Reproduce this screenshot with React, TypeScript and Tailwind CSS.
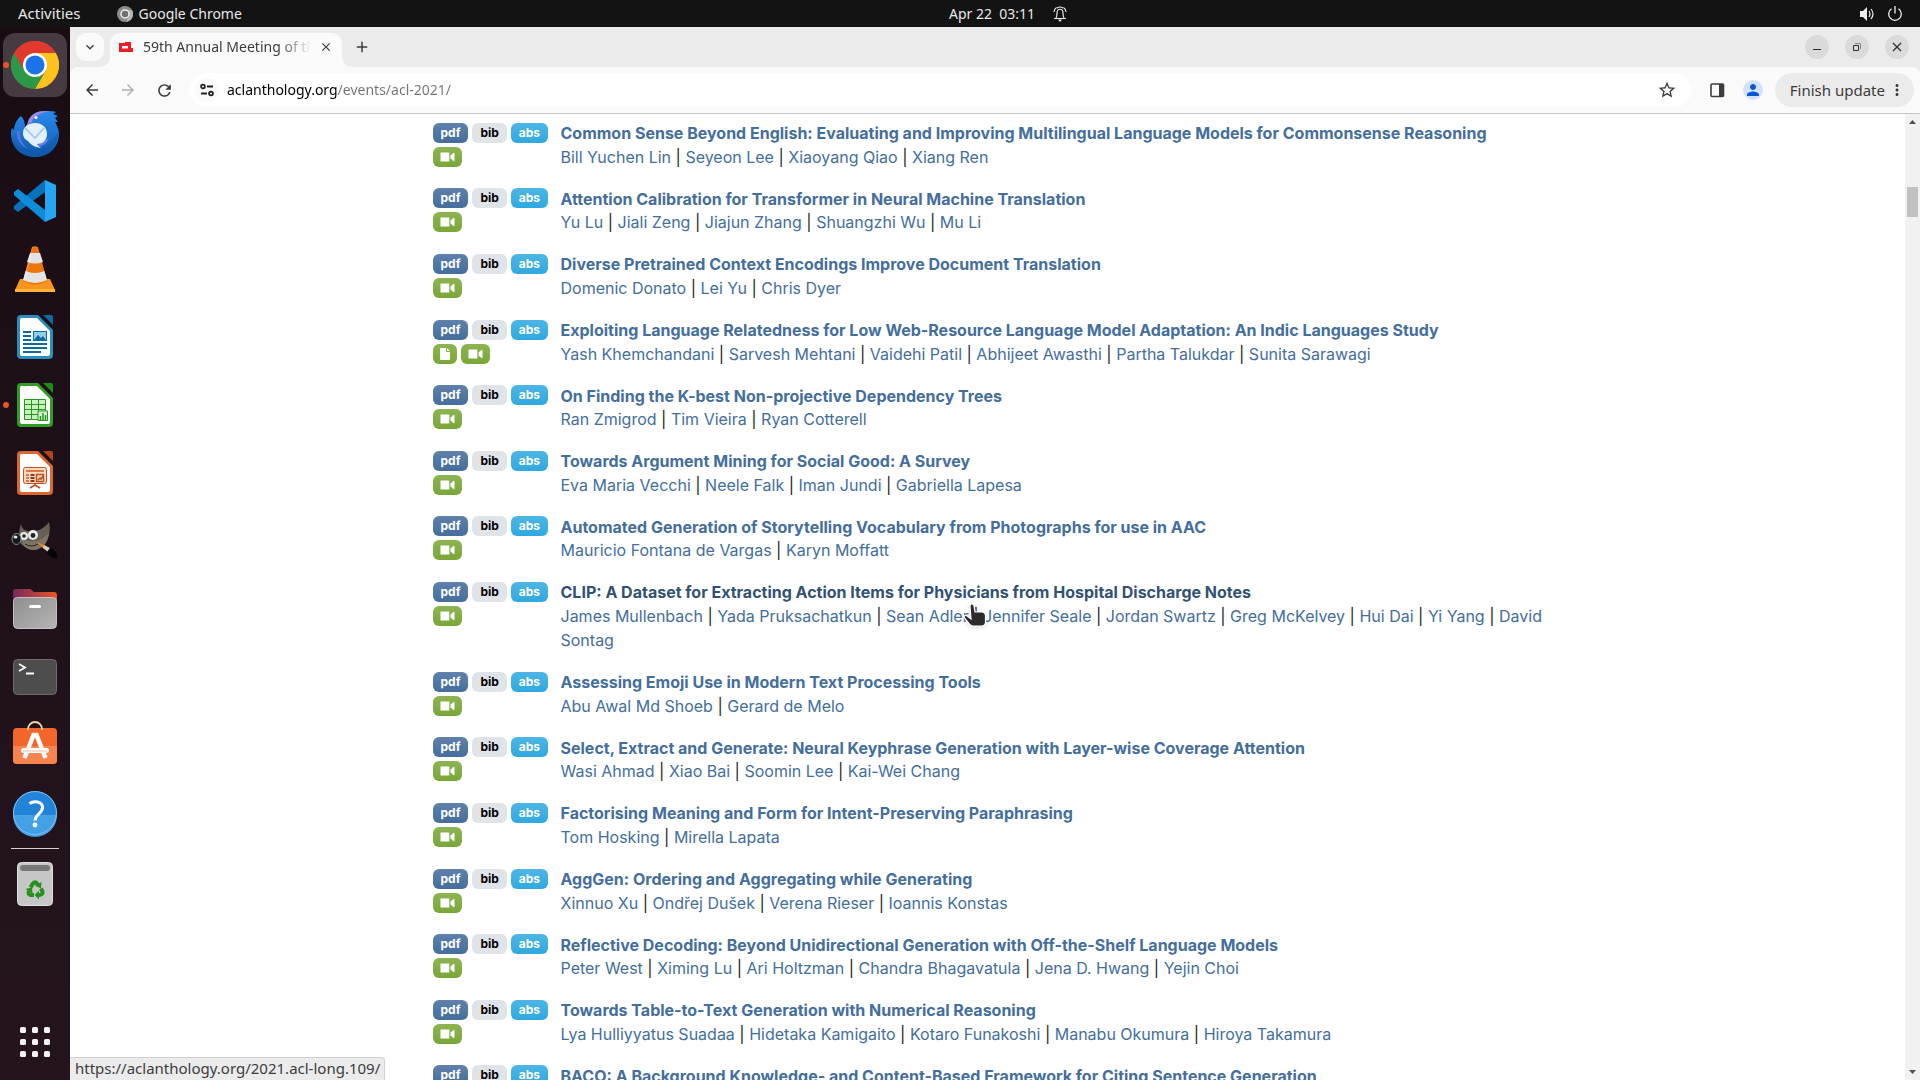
import { Fragment, type ReactNode } from "react";
import {
  MdAdd,
  MdArrowBack,
  MdArrowForward,
  MdClose,
  MdExpandMore,
  MdMoreVert,
  MdPerson,
  MdRefresh,
  MdStarBorder,
} from "react-icons/md";

interface Paper {
  title: string;
  authors: string[];
  hasFile?: boolean;
  hovered?: boolean;
}

const papers: Paper[] = [
  {
    title: "Common Sense Beyond English: Evaluating and Improving Multilingual Language Models for Commonsense Reasoning",
    authors: ["Bill Yuchen Lin", "Seyeon Lee", "Xiaoyang Qiao", "Xiang Ren"],
  },
  {
    title: "Attention Calibration for Transformer in Neural Machine Translation",
    authors: ["Yu Lu", "Jiali Zeng", "Jiajun Zhang", "Shuangzhi Wu", "Mu Li"],
  },
  {
    title: "Diverse Pretrained Context Encodings Improve Document Translation",
    authors: ["Domenic Donato", "Lei Yu", "Chris Dyer"],
  },
  {
    title: "Exploiting Language Relatedness for Low Web-Resource Language Model Adaptation: An Indic Languages Study",
    authors: ["Yash Khemchandani", "Sarvesh Mehtani", "Vaidehi Patil", "Abhijeet Awasthi", "Partha Talukdar", "Sunita Sarawagi"],
    hasFile: true,
  },
  {
    title: "On Finding the K-best Non-projective Dependency Trees",
    authors: ["Ran Zmigrod", "Tim Vieira", "Ryan Cotterell"],
  },
  {
    title: "Towards Argument Mining for Social Good: A Survey",
    authors: ["Eva Maria Vecchi", "Neele Falk", "Iman Jundi", "Gabriella Lapesa"],
  },
  {
    title: "Automated Generation of Storytelling Vocabulary from Photographs for use in AAC",
    authors: ["Mauricio Fontana de Vargas", "Karyn Moffatt"],
  },
  {
    title: "CLIP: A Dataset for Extracting Action Items for Physicians from Hospital Discharge Notes",
    authors: ["James Mullenbach", "Yada Pruksachatkun", "Sean Adler", "Jennifer Seale", "Jordan Swartz", "Greg McKelvey", "Hui Dai", "Yi Yang", "David Sontag"],
    hovered: true,
  },
  {
    title: "Assessing Emoji Use in Modern Text Processing Tools",
    authors: ["Abu Awal Md Shoeb", "Gerard de Melo"],
  },
  {
    title: "Select, Extract and Generate: Neural Keyphrase Generation with Layer-wise Coverage Attention",
    authors: ["Wasi Ahmad", "Xiao Bai", "Soomin Lee", "Kai-Wei Chang"],
  },
  {
    title: "Factorising Meaning and Form for Intent-Preserving Paraphrasing",
    authors: ["Tom Hosking", "Mirella Lapata"],
  },
  {
    title: "AggGen: Ordering and Aggregating while Generating",
    authors: ["Xinnuo Xu", "Ondřej Dušek", "Verena Rieser", "Ioannis Konstas"],
  },
  {
    title: "Reflective Decoding: Beyond Unidirectional Generation with Off-the-Shelf Language Models",
    authors: ["Peter West", "Ximing Lu", "Ari Holtzman", "Chandra Bhagavatula", "Jena D. Hwang", "Yejin Choi"],
  },
  {
    title: "Towards Table-to-Text Generation with Numerical Reasoning",
    authors: ["Lya Hulliyyatus Suadaa", "Hidetaka Kamigaito", "Kotaro Funakoshi", "Manabu Okumura", "Hiroya Takamura"],
  },
  {
    title: "BACO: A Background Knowledge- and Content-Based Framework for Citing Sentence Generation",
    authors: ["Yubin Ge", "Ly Dinh", "Xiaofeng Liu", "Jinsong Su", "Ziyao Lu", "Ante Wang", "Jana Diesner"],
  },
];

const badge = "mr-1 inline-flex h-5 items-center rounded-md align-middle text-xs leading-none font-bold";

function VideoIcon() {
  return (
    <svg className="h-3 w-[15px]" viewBox="0 0 15 12" fill="#fff">
      <path d="M.5 1.5h8.800v9H.5zM10.500 4.500 13.500 2a.7.7 0 0 1 1 .6v6.800a.7.7 0 0 1-1 .6l-3-2.500z" />
    </svg>
  );
}

function FileIcon() {
  return (
    <svg className="h-3 w-[10px]" viewBox="0 0 10 12" fill="#fff">
      <path d="M.9 0H6v3.300c0 .4.300.7.7.7H10v7.200a.8.8 0 0 1-.8.8H.9a.8.8 0 0 1-.8-.8V.8A.8.8 0 0 1 .9 0zM7 0l3 3H7z" />
    </svg>
  );
}

function PaperRow({ paper }: { paper: Paper }) {
  return (
    <li className="mb-4 flex">
      <div className="mr-2 w-[120px] shrink-0 whitespace-nowrap">
        <a href="#pdf" className={`${badge} bg-linear-to-b from-[#5f81ab] to-[#446e9b] px-2 text-white`}>pdf</a>
        <a href="#bib" className={`${badge} bg-[#e0e4e8] px-2 text-black`}>bib</a>
        <a href="#abs" className={`${badge} bg-linear-to-b from-[#4db6e5] to-[#2da9e0] px-2 text-white`}>abs</a>
        <br />
        {paper.hasFile && (
          <a href="#file" aria-label="Software" className={`${badge} bg-linear-to-b from-[#8db453] to-[#79a736] px-[7px]`}>
            <FileIcon />
          </a>
        )}
        <a href="#video" aria-label="Video" className={`${badge} bg-linear-to-b from-[#8db453] to-[#79a736] px-[7px]`}>
          <VideoIcon />
        </a>
      </div>
      <div>
        <strong className="font-bold">
          <a href="#paper" className={`align-middle ${paper.hovered ? "text-[#325173]" : "text-[#446e9b]"}`}>
            {paper.title}
          </a>
        </strong>
        <br />
        {paper.authors.map((author, i) => (
          <Fragment key={author}>
            {i > 0 && " | "}
            <a href="#author" className="text-[#446e9b]">{author}</a>
          </Fragment>
        ))}
      </div>
    </li>
  );
}

function ChromeIcon() {
  return (
    <svg className="size-12" viewBox="0 0 48 48">
      <circle cx="24" cy="24" r="24" fill="#e33b2e" />
      <path d="M24 12h20.800A24 24 0 0 1 24 48l10.400-18z" fill="#fcc31e" />
      <path d="M3.200 12A24 24 0 0 0 24 48l10.400-18L24 24l-10.400 6z" fill="#2a9846" />
      <path d="M3.200 12A24 24 0 0 1 44.800 12H24L13.600 30z" fill="#e03a2f" />
      <circle cx="24" cy="24" r="12" fill="#fff" />
      <circle cx="24" cy="24" r="9.500" fill="#1a73e8" />
    </svg>
  );
}

function ThunderbirdIcon() {
  return (
    <svg className="size-12" viewBox="0 0 48 48">
      <defs>
        <linearGradient id="bird" x1="0" y1="0" x2="0" y2="1">
          <stop offset="0" stopColor="#2a8bee" />
          <stop offset="1" stopColor="#0d57ad" />
        </linearGradient>
      </defs>
      <path d="M17 13C19 5 27 2 34 2c5 0 9 0 11 1l-3 2 5 2-3 2 3 4-3 0c2 4 4 7 4 12 0 13-10 23-24 23S0 38 0 25c0-2 0-4 1-6l2 2c0-5 3-11 7-14 4 4 4 9 4 13z" fill="url(#bird)" />
      <path d="M1 26c3 12 16 18 28 14 10-3 15-12 18-17 1 15-9 25-23 25S1 39 1 26z" fill="#0f57ac" opacity=".5" />
      <path d="M17 13C19 5 27 2 34 2l4 .300C28 4 22 8 21 13l-5 2z" fill="#a487ea" />
      <path d="M6 22c-1 8 4 15 11 18-6-5-9-12-8-18z" fill="#5a72e0" />
      <path d="M23 38c8 0 13-3 15-9l-12 7z" fill="#6a80e8" />
      <circle cx="25" cy="8.500" r="1.500" fill="#fff" />
      <path d="M24 14c7 0 12 4 12 11 0 6-4 10-10 10 1 2 3 3 4 4-7-1-11-4-13-7-4-2-5-5-5-8 0-6 5-10 12-10z" fill="#e3effc" />
      <path d="m14 19 10 10 9-10" fill="none" stroke="#9cc3ee" strokeWidth="1.500" />
    </svg>
  );
}

function CodeIcon() {
  return (
    <svg className="size-12" viewBox="0 0 48 48">
      <path d="m3 32 4 3 27-20V3L3 29z" fill="#0a72ba" />
      <path d="m3 15 4-3 27 21v12L3 18z" fill="#0f8ddb" />
      <path d="m34 3 11 5v32l-11 5z" fill="#27a5f3" />
    </svg>
  );
}

function VlcIcon() {
  return (
    <svg className="size-12" viewBox="0 0 48 48">
      <path d="M9 34h30l5 11c0 1 0 2-1 2H5c-1 0-1-1-1-2z" fill="#f89420" />
      <path d="M4 44h40v3H4z" fill="#ffb338" />
      <path d="M21 2q3-1.500 6 0l9 34q-12 7-24 0z" fill="#ee7409" />
      <path d="m19 8 10 0 3 9q-8 3-16 0zM14.500 26q9.500 4 19 0l2.500 9q-12 6-24 0z" fill="#e4e4e4" />
      <path d="M24 1h-2l-7 35q-3-1-3-1l9-33z" fill="#fff" opacity=".18" />
    </svg>
  );
}

function OfficeIcon({ dark, main, children }: { dark: string; main: string; children: ReactNode }) {
  return (
    <svg className="size-12" viewBox="0 0 48 48">
      <path d="M10 2h17l15 15v25a4 4 0 0 1-4 4H10a4 4 0 0 1-4-4V6a4 4 0 0 1 4-4z" fill={main} />
      <path d="M10 5h16l13 13v23a2 2 0 0 1-2 2H11a2 2 0 0 1-2-2V7a2 2 0 0 1 1-2z" fill="#fff" />
      <path d="M32 2h8a2 2 0 0 1 2 2v8z" fill={dark} />
      {children}
    </svg>
  );
}

function WriterIcon() {
  return (
    <OfficeIcon dark="#0d6ba0" main="#2b8cbe">
      <path d="M12 19h8M12 23h8M12 27h8M12 31h24M12 35h24M12 39h18" stroke="#0b6c9f" strokeWidth="2" />
      <rect x="22.500" y="18.500" width="13" height="9" fill="#8fd0f0" stroke="#0b6c9f" />
      <path d="m23 27 4-5 3 3 2-2 3 4z" fill="#0b6c9f" />
    </OfficeIcon>
  );
}

function CalcIcon() {
  return (
    <OfficeIcon dark="#1f8c13" main="#2f9f22">
      <path d="M13.500 18.500h21v20h-21z" fill="#c5f2bd" stroke="#2c9520" />
      <path d="M13 23.500h22M13 28.500h22M13 33.500h22M20.500 18v21M27.500 18v21" stroke="#2c9520" />
      <path d="M27 30h9.500v9.500H27z" fill="#d5f7cf" stroke="#2c9520" />
      <path d="M29.500 39v-4M32 39v-7M34.500 39v-5" stroke="#2c9520" strokeWidth="1.500" />
    </OfficeIcon>
  );
}

function ImpressIcon() {
  return (
    <OfficeIcon dark="#b84614" main="#dc6731">
      <rect x="12.500" y="18.500" width="23" height="16" rx="2" fill="#fbd9c5" stroke="#bb5220" />
      <path d="M15 22h18" stroke="#e0773f" strokeWidth="2" />
      <path d="M15 26h3M15 29h3M15 32h3" stroke="#e0773f" strokeWidth="2" />
      <path d="M19.500 26h4M19.500 29h4M19.500 32h4" stroke="#8e3a14" strokeWidth="2" />
      <path d="M25.500 25.500h7v7h-7zM27 31l2-2 1 1 2-3M24 35v2M24 36l-5 3M24 36l5 3" fill="none" stroke="#bb5220" strokeWidth="1.500" />
    </OfficeIcon>
  );
}

function GimpIcon() {
  return (
    <svg className="size-12" viewBox="0 0 48 48">
      <path d="M10 7c1 5 4 7 8 7 8 1 15-2 20-9 2 8 0 17-4 22-6 7-17 7-24 0-3-6-2-14 0-20z" fill="#666052" />
      <path d="M10 20c6 6 18 7 28-4-1 9-6 17-16 17-7 0-11-5-12-13z" fill="#7c7564" />
      <circle cx="13" cy="19" r="4" fill="#e9e9e9" />
      <circle cx="22" cy="18" r="5" fill="#e9e9e9" />
      <circle cx="13" cy="19" r="1.800" fill="#222" />
      <circle cx="22" cy="18.500" r="2.400" fill="#222" />
      <ellipse cx="5.500" cy="22" rx="4.500" ry="5.500" fill="#16191b" stroke="#8a908f" />
      <ellipse cx="4.500" cy="20" rx="2" ry="1.500" fill="#dfe8e8" />
      <path d="M14 27q7 4 13 0" stroke="#26221c" fill="none" />
      <path d="m26 25 9 4-2 3z" fill="#e88a1a" />
      <path d="m33 28 6 3-2 4-5-4z" fill="#d4d0c8" />
      <path d="m39 31c5 2 8 6 7 11-5-1-9-3-10-7z" fill="#050505" />
    </svg>
  );
}

function FilesIcon() {
  return (
    <svg className="size-12" viewBox="0 0 48 48">
      <defs>
        <linearGradient id="folder" x1="0" y1="0" x2="1" y2="0">
          <stop offset="0" stopColor="#76295c" />
          <stop offset="1" stopColor="#ed5427" />
        </linearGradient>
        <linearGradient id="drawer" x1="0" y1="0" x2="1" y2="1">
          <stop offset="0" stopColor="#8e8e8e" />
          <stop offset="1" stopColor="#b5b5b5" />
        </linearGradient>
      </defs>
      <path d="M5 4h13q2 0 3 1.500L23 7h20q3 0 3 3v8H2V7q0-3 3-3z" fill="url(#folder)" />
      <rect x="2.500" y="12.500" width="43" height="31" rx="4" fill="url(#drawer)" stroke="#c2c2c2" />
      <rect x="18" y="20" width="12" height="3" rx="1.500" fill="#fff" />
    </svg>
  );
}

function TerminalIcon() {
  return (
    <svg className="size-12" viewBox="0 0 48 48">
      <rect x="2.500" y="6.500" width="43" height="35" rx="4" fill="#4d4d4d" stroke="#6c6c6c" />
      <path d="m8 11 6 3.500L8 18M15 20.500h8" fill="none" stroke="#fff" strokeWidth="1.800" />
    </svg>
  );
}

function SoftwareIcon() {
  return (
    <svg className="size-12" viewBox="0 0 48 48">
      <rect x="2" y="7" width="44" height="36" rx="4" fill="#f2652b" />
      <path d="M2 25h44v14a4 4 0 0 1-4 4H6a4 4 0 0 1-4-4z" fill="#f58451" />
      <path d="M17 9V8a7 7 0 0 1 14 0v1" fill="none" stroke="#f5d6a0" strokeWidth="1.800" />
      <path d="m13.500 37 9-23h3l9 23" fill="none" stroke="#fff" strokeWidth="4.500" />
      <rect x="10" y="27" width="28" height="5" rx="2.500" fill="#fff" />
      <path d="M12 30h24" stroke="#f5b899" />
    </svg>
  );
}

function HelpIcon() {
  return (
    <svg className="size-12" viewBox="0 0 48 48">
      <circle cx="24" cy="24" r="22" fill="#2284d9" />
      <path d="M2 26h44a22 22 0 0 1-44 0z" fill="#43a0e4" />
      <circle cx="24" cy="24" r="21.500" fill="none" stroke="#80c1ee" />
      <path d="M18.500 14.500c4-3 13-2.500 13 4 0 6-7 6-7.500 13" fill="none" stroke="#fff" strokeWidth="3" />
      <circle cx="24" cy="36" r="2.400" fill="#fff" />
    </svg>
  );
}

function TrashIcon() {
  return (
    <svg className="size-12" viewBox="0 0 48 48">
      <rect x="6.500" y="2.500" width="35" height="43" rx="4" fill="#c6c6c6" stroke="#e0e0e0" />
      <rect x="9" y="5" width="30" height="6" rx="3" fill="#777" />
      <g fill="none" stroke="#26901c" strokeWidth="4">
        <path d="m19.500 27.500 2.500-4q2-2.500 4 0l1.500 2" />
        <path d="m30 28.500 1.500 3q.5 3.500-3.500 3.500" />
        <path d="M23 35h-3.500q-3-1-1.500-4" />
      </g>
      <path d="m30.500 22-.5 6.500-6-3zM28 39.500v-9l-4.500 4.500zM14.500 29l6.500-1.500.5 6z" fill="#26901c" />
    </svg>
  );
}

function GridIcon() {
  const steps = [9, 21, 33];
  return (
    <svg className="size-12" viewBox="0 0 48 48" fill="#f4f2f3">
      {steps.map((y) => steps.map((x) => <rect key={`${x}-${y}`} x={x} y={y} width="6" height="6" rx="1.500" />))}
    </svg>
  );
}

const dockItems = [
  { name: "Google Chrome", icon: <ChromeIcon />, active: true, running: true },
  { name: "Thunderbird", icon: <ThunderbirdIcon /> },
  { name: "Visual Studio Code", icon: <CodeIcon /> },
  { name: "VLC", icon: <VlcIcon /> },
  { name: "LibreOffice Writer", icon: <WriterIcon /> },
  { name: "LibreOffice Calc", icon: <CalcIcon />, running: true },
  { name: "LibreOffice Impress", icon: <ImpressIcon /> },
  { name: "GIMP", icon: <GimpIcon /> },
  { name: "Files", icon: <FilesIcon /> },
  { name: "Terminal", icon: <TerminalIcon /> },
  { name: "Ubuntu Software", icon: <SoftwareIcon /> },
  { name: "Help", icon: <HelpIcon /> },
];

function Dock() {
  return (
    <nav className="flex w-[70px] shrink-0 flex-col items-center gap-1 bg-linear-to-b from-[#190d14] to-[#25141e] py-[6px]">
      {dockItems.map((item) => (
        <button
          key={item.name}
          aria-label={item.name}
          className={`relative flex size-16 shrink-0 items-center justify-center rounded-xl ${item.active ? "bg-[#463b42]" : ""}`}
        >
          {item.running && <span className="absolute top-[29px] left-0 size-[6px] rounded-full bg-[#e95420]" />}
          {item.icon}
        </button>
      ))}
      <hr className="-my-px w-12 border-[#d6d2d4]" />
      <button aria-label="Trash" className="flex size-16 shrink-0 items-center justify-center">
        <TrashIcon />
      </button>
      <button aria-label="Show Applications" className="mt-auto flex size-16 shrink-0 items-center justify-center">
        <GridIcon />
      </button>
    </nav>
  );
}

function TopBar() {
  return (
    <header className="grid h-[27px] shrink-0 grid-cols-3 items-center bg-[#131313] text-[14px] text-[#e8e8e8]">
      <div className="flex items-center pl-[18px]">
        <button className="text-[15px]">Activities</button>
        <button className="ml-9 flex items-center gap-[6px]">
          <svg className="size-4" viewBox="0 0 16 16">
            <circle cx="8" cy="8" r="8" fill="#8b8b8b" />
            <path d="M8 4h7a8 8 0 0 1-6 12l3-6z" fill="#b5b5b5" />
            <circle cx="8" cy="8" r="4" fill="#6e6e6e" stroke="#eee" strokeWidth="1.500" />
          </svg>
          Google Chrome
        </button>
      </div>
      <div className="flex items-center justify-center gap-[18px] pl-24">
        <button className="whitespace-pre">Apr 22  03:11</button>
        <svg className="h-4 w-[14px]" viewBox="0 0 14 16" fill="none" stroke="#e8e8e8" strokeWidth="1.200">
          <path d="M1 12.500h12M3 12c1-1 1-2 1-5 0-5 6-5 6 0 0 3 0 4 1 5M1 6c0-2 1-3.500 2.500-4.500M13 6c0-2-1-3.500-2.500-4.500M4 2q3-2 6 0" />
          <path d="M5 13.500h4L7 16z" fill="#e8e8e8" stroke="none" />
        </svg>
      </div>
      <div className="flex items-center justify-end gap-3 pr-[17px]">
        <svg className="size-4" viewBox="0 0 16 16">
          <path d="M1 5h3l4-4v14l-4-4H1z" fill="#f0f0f0" />
          <path d="M10 5q2 3 0 6M12 3q4 5 0 10" fill="none" stroke="#f0f0f0" strokeWidth="1.200" />
        </svg>
        <svg className="size-4" viewBox="0 0 16 16" fill="none" stroke="#f0f0f0" strokeWidth="1.300">
          <path d="M8 0v7.500M4.500 2.800a6.300 6.300 0 1 0 7 0" />
        </svg>
      </div>
    </header>
  );
}

function TabStrip() {
  return (
    <div className="flex h-10 shrink-0 items-center bg-[#ebebeb] pl-[6px] text-[#3c3c3c]">
      <button aria-label="Search tabs" className="flex size-7 items-center justify-center rounded-[10px] bg-[#fafafa]">
        <MdExpandMore className="size-4" />
      </button>
      <div className="relative ml-[6px] flex h-[34px] w-[232px] items-center self-end rounded-t-[10px] bg-[#fafafa] pr-2 pb-[6px] pl-[9px]">
        <svg className="absolute bottom-0 -left-[10px] size-[10px]" viewBox="0 0 10 10" fill="#fafafa">
          <path d="M10 0v10H0A10 10 0 0 0 10 0z" />
        </svg>
        <svg className="absolute -right-[10px] bottom-0 size-[10px]" viewBox="0 0 10 10" fill="#fafafa">
          <path d="M0 0v10h10A10 10 0 0 1 0 0z" />
        </svg>
        <svg className="h-[10px] w-[14px]" viewBox="0 0 14 10">
          <path fillRule="evenodd" fill="#ed1c24" d="M0 1h6V0h6v6h2v4H0zM3 4v2.500h6V4z" />
        </svg>
        <span className="ml-[10px] flex-1 overflow-hidden mask-[linear-gradient(to_right,#000_135px,transparent_168px)] pb-[2px] text-[14px] whitespace-nowrap">
          59th Annual Meeting of the Association for Computational Linguistics
        </span>
        <button aria-label="Close tab" className="ml-[9px] flex size-4 items-center justify-center">
          <MdClose className="size-[14px]" />
        </button>
      </div>
      <button aria-label="New tab" className="ml-[11px] flex size-[18px] items-center justify-center">
        <MdAdd className="size-[18px]" />
      </button>
      <div className="ml-auto flex gap-4 pr-[11px]">
        <button aria-label="Minimize" className="flex size-6 items-center justify-center rounded-full bg-[#dadada]">
          <svg className="size-3" viewBox="0 0 12 12"><path d="M2 8.500h8" stroke="#2e2e2e" /></svg>
        </button>
        <button aria-label="Restore" className="flex size-6 items-center justify-center rounded-full bg-[#dadada]">
          <svg className="size-3" viewBox="0 0 12 12" fill="none">
            <path d="M4 2.500h5.500V8" stroke="#8a8a8a" />
            <path d="M2.500 4.500h5v5h-5z" stroke="#2e2e2e" />
          </svg>
        </button>
        <button aria-label="Close" className="flex size-6 items-center justify-center rounded-full bg-[#dadada]">
          <svg className="size-3" viewBox="0 0 12 12"><path d="m2 2 8 8m0-8-8 8" stroke="#2e2e2e" strokeWidth="1.300" /></svg>
        </button>
      </div>
    </div>
  );
}

function Toolbar() {
  return (
    <div className="bg-[#ebebeb]">
      <div className="flex h-[47px] items-center rounded-t-[8px] border-b border-[#c6c6c6] bg-[#fafafa] pr-[6px] pl-3 text-[#3c3c3c]">
        <button aria-label="Back" className="mr-4 ml-px"><MdArrowBack className="size-[18px]" /></button>
        <button aria-label="Forward" className="mr-4 ml-[2px] text-[#b0b0b0]"><MdArrowForward className="size-[18px]" /></button>
        <button aria-label="Reload" className="ml-[2px]"><MdRefresh className="size-[19px]" /></button>
        <div className="ml-4 flex h-[34px] flex-1 items-center rounded-full bg-white pr-[14px] pl-[5px]">
          <button aria-label="View site information" className="flex size-6 items-center justify-center rounded-full bg-[#fafafa]">
            <svg className="size-4" viewBox="0 0 16 16" fill="none" stroke="#1f1f1f" strokeWidth="1.800">
              <circle cx="4" cy="4.500" r="1.900" />
              <path d="M8 4.500h6M2 11.500h6" />
              <circle cx="12" cy="11.500" r="1.900" />
            </svg>
          </button>
          <input
            aria-label="Address and search bar"
            defaultValue="aclanthology.org/events/acl-2021/"
            className="ml-2 flex-1 bg-[linear-gradient(to_right,#000_110px,#737373_110px)] bg-clip-text pb-[2px] text-[14px] text-transparent outline-none"
          />
          <button aria-label="Bookmark this tab"><MdStarBorder className="size-5" /></button>
        </div>
        <button aria-label="Side panel" className="ml-[18px]">
          <svg className="size-4" viewBox="0 0 16 16">
            <rect x="2" y="2" width="12.500" height="12.500" rx="1" fill="none" stroke="#3c3c3c" strokeWidth="1.600" />
            <path d="M10 2h4.500v12.500H10z" fill="#3c3c3c" />
          </svg>
        </button>
        <button aria-label="Profile" className="ml-[18px] flex size-5 items-center justify-center rounded-full bg-[#d3e3fd] text-[#0b57d0]">
          <MdPerson className="size-[18px]" />
        </button>
        <button className="ml-3 flex h-[34px] items-center rounded-full bg-[#ebebeb] pr-[8px] pl-[15px] text-[15px] whitespace-nowrap">
          Finish update
          <MdMoreVert className="ml-[3px] size-[18px]" />
        </button>
      </div>
    </div>
  );
}

function Scrollbar() {
  return (
    <div className="flex w-[15px] shrink-0 flex-col items-center bg-[#f1f1f1] py-[6px]">
      <svg className="h-1 w-[7px]" viewBox="0 0 7 4"><path d="M0 4h7L3.500 0z" fill="#505050" /></svg>
      <div className="mt-[63px] h-[30px] w-[11px] bg-[#c1c1c1]" />
      <svg className="mt-auto h-1 w-[7px]" viewBox="0 0 7 4"><path d="M0 0h7L3.500 4z" fill="#505050" /></svg>
    </div>
  );
}

export default function App() {
  return (
    <div className="flex h-screen flex-col overflow-hidden bg-white font-['Noto_Sans',sans-serif]">
      <TopBar />
      <div className="flex min-h-0 flex-1">
        <Dock />
        <div className="relative flex min-w-0 flex-1 flex-col">
          <TabStrip />
          <Toolbar />
          <div className="flex min-h-0 flex-1">
            <main className="relative min-w-0 flex-1 overflow-hidden font-[Inter,sans-serif] text-base text-[#222]">
              <ul className="mx-auto max-w-[1140px] px-[15px] pt-[5px]">
                {papers.map((paper) => (
                  <PaperRow key={paper.title} paper={paper} />
                ))}
              </ul>
            </main>
            <Scrollbar />
          </div>
          <div className="absolute bottom-0 left-0 h-[23px] rounded-tr-[4px] border-t border-r border-[#d0d0d0] bg-[#ebebeb] pr-[4px] pl-[5px] text-[15px] leading-[21px] text-[#3c3c3c]">
            https://aclanthology.org/2021.acl-long.109/
          </div>
        </div>
      </div>
      <svg className="absolute top-[602px] left-[963px] h-[27px] w-6 drop-shadow-sm" viewBox="0 0 24 27">
        <path
          d="M7 4.500C7 1 10.500 1 11 4l1 6h7q3 0 3.500 3v7q0 4-4 4H10q-2 0-3.500-2L1.500 16q-1-3 2-2.500L8 17z"
          fill="#2b2b2b"
          stroke="#fff"
          strokeWidth="1.200"
        />
      </svg>
    </div>
  );
}
